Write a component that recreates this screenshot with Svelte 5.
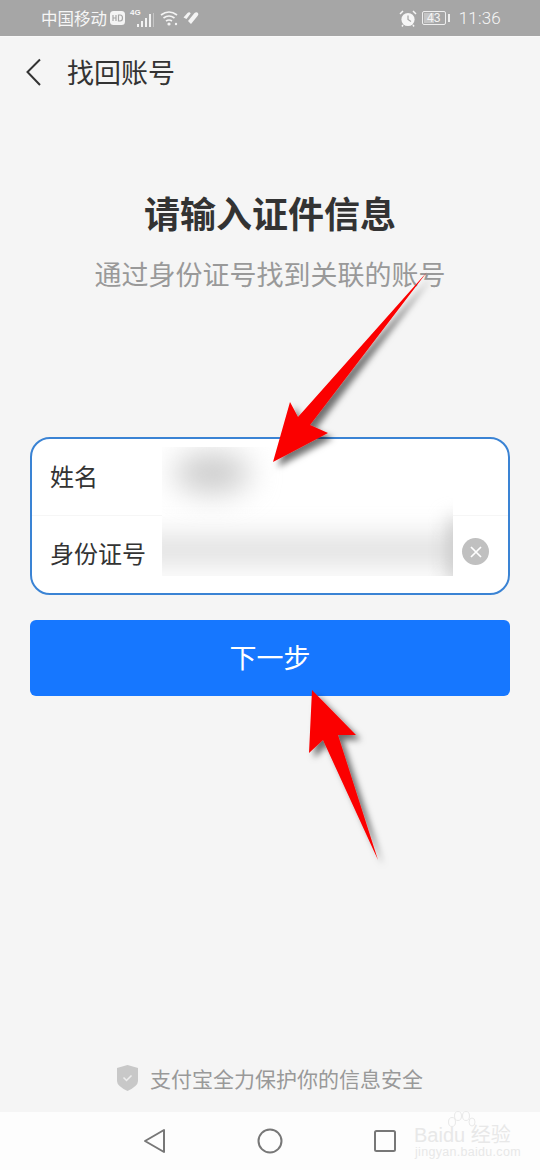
<script>
  const bars = [3, 6, 9, 13];
</script>

<div class="page">
  <header class="status">
    <div class="left">
      <span class="carrier">中国移动</span>
      <svg class="hd" viewBox="0 0 15 14" width="15" height="14"><rect width="15" height="14" rx="3.500" fill="#f4f4f4"/><path d="M3 4v6M6 4v6M3 7h3M8.500 4v6h1.600q2.400 0 2.400-3t-2.400-3z" fill="none" stroke="#a6a6a6" stroke-width="1.200"/></svg>
      <div class="signal">
        <span class="g4">4G</span>
        <svg viewBox="0 0 18 14" width="18" height="14"><g fill="#f2f2f2">{#each bars as b, i}<rect x={i * 4} y={14 - b} width="2" height={b}/>{/each}</g><rect x="16" y="0" width="1" height="14" fill="#c6c6c6"/></svg>
      </div>
      <svg class="wifi" viewBox="0 0 19 16" width="19" height="16" fill="none" stroke="#f4f4f4" stroke-width="1.700"><path d="M1 5q8-6 16 0M3.500 8q5.500-4 11 0M6 11q3-2 6 0"/><circle cx="9" cy="14" r="1.600" fill="#f4f4f4" stroke="none"/><circle cx="16" cy="14" r="1.200" fill="#f4f4f4" stroke="none"/></svg>
      <svg class="heart" viewBox="0 0 16 14" width="16" height="14"><path d="M0.500 6.500L4.500 2q2-1.500 3.200.5L3.500 8zM5 10l6.500-8q2-1.500 3.500 0 1 1.500-.5 3L8 13z" fill="#f4f4f4"/></svg>
    </div>
    <div class="right">
      <svg class="alarm" viewBox="0 0 18 17" width="18" height="17"><circle cx="9" cy="9.500" r="6.600" fill="#f6f6f6"/><path d="M9 5.500v4l3 2" fill="none" stroke="#a6a6a6" stroke-width="1.200"/><path d="M1 4l3-3M17 4l-3-3M4 15l-1 1.500M14 15l1 1.500" stroke="#f6f6f6" stroke-width="1.500"/></svg>
      <div class="battery"><span class="cell"><span class="fill"></span><span class="num">43</span></span><span class="nub"></span></div>
      <span class="time">11:36</span>
    </div>
  </header>

  <nav class="bar">
    <svg viewBox="0 0 18 28" width="18" height="28" fill="none" stroke="#333" stroke-width="2"><path d="M16 1.500L3.500 14 16 27"/></svg>
    <span>找回账号</span>
  </nav>

  <main class="content">
    <section class="intro">
      <h1>请输入证件信息</h1>
      <p>通过身份证号找到关联的账号</p>
    </section>

    <form class="card">
      <div class="row first"><span class="label">姓名</span></div>
      <div class="row second">
        <span class="label">身份证号</span>
        <span class="clear">
          <svg viewBox="0 0 12 12" width="12" height="12" stroke="#fff" stroke-width="1.700"><path d="M1 1l10 10M11 1L1 11"/></svg>
        </span>
      </div>
      <div class="mask">
        <i class="smudge name"></i>
        <i class="smudge id"></i>
        <i class="smudge edge"></i>
      </div>
    </form>

    <button type="button" class="next">下一步</button>

    <footer class="safe">
      <svg viewBox="0 0 21 26" width="21" height="26"><path d="M10.500 0L21 3v13q0 5-10.500 10Q0 21 0 16V3z" fill="#c8c8c8"/><path d="M6.500 12.500l3 3 5-5" fill="none" stroke="#eee" stroke-width="1.500"/></svg>
      <span>支付宝全力保护你的信息安全</span>
    </footer>
  </main>

  <div class="softkeys">
    <svg viewBox="0 0 24 26" width="24" height="26" fill="none" stroke="#777" stroke-width="2" stroke-linejoin="round"><path d="M21 2v22L2 13z"/></svg>
    <svg viewBox="0 0 26 26" width="26" height="26" fill="none" stroke="#777" stroke-width="2"><circle cx="13" cy="13" r="11.500"/></svg>
    <svg viewBox="0 0 24 24" width="24" height="24" fill="none" stroke="#777" stroke-width="2"><rect x="2" y="2" width="20" height="20" rx="1.500"/></svg>
  </div>

  <div class="watermark">
    <svg class="paw" viewBox="0 0 30 26" width="30" height="26" fill="none" stroke="#e9e9e9"><ellipse cx="6" cy="11" rx="3.500" ry="4.500"/><ellipse cx="12" cy="5" rx="3.500" ry="4.500"/><ellipse cx="20" cy="5" rx="3.500" ry="4.500"/><ellipse cx="26" cy="11" rx="3" ry="4"/></svg>
    <div class="wm-main">Bai<b>du</b> 经验</div>
    <div class="wm-sub">jingyan.baidu.com</div>
  </div>

  <svg class="arrows" viewBox="0 0 540 1170" width="540" height="1170">
    <defs>
      <filter id="drop" x="-30%" y="-30%" width="160%" height="160%">
        <feDropShadow dx="5" dy="5" stdDeviation="3" flood-color="#000" flood-opacity="0.55"/>
      </filter>
    </defs>
    <path filter="url(#drop)" d="M427 272L310 425 328 433 273 462 290 402 298 417z" fill="#fb0000"/>
    <path filter="url(#drop)" d="M312 690L356 735 338 735 378 860 323 740 309 753z" fill="#fb0000"/>
  </svg>
</div>

<style>
  :global(body) {
    margin: 0;
    background: #f5f5f5;
  }
  .page {
    position: relative;
    width: 540px;
    height: 1170px;
    overflow: hidden;
    display: flex;
    flex-direction: column;
    background: #f5f5f5;
    font-family: "Noto Sans CJK SC", "Noto Sans", sans-serif;
  }
  .status {
    height: 36px;
    flex: none;
    display: flex;
    align-items: center;
    justify-content: space-between;
    padding: 0 39px 0 41px;
    background: #a6a6a6;
    color: #f6f6f6;
    border-bottom: 1px solid #f9f9f9;
    box-sizing: content-box;
  }
  .left, .right {
    display: flex;
    align-items: center;
  }
  .carrier {
    font-size: 16.500px;
    line-height: 20px;
    width: 67px;
  }
  .hd { margin-left: 2px; }
  .signal {
    position: relative;
    width: 30px;
    height: 18px;
    margin-left: 0;
    display: flex;
    align-items: flex-end;
    justify-content: flex-end;
  }
  .g4 {
    position: absolute;
    left: 5px;
    top: -1px;
    font: 700 8px/10px "Liberation Sans", sans-serif;
  }
  .wifi { margin-left: 5px; }
  .heart { margin-left: 4px; }
  .alarm { margin-right: 5px; }
  .battery {
    display: flex;
    align-items: center;
    margin-right: 9px;
  }
  .cell {
    position: relative;
    width: 22px;
    height: 12px;
    border: 1.500px solid #eee;
    border-radius: 2px;
    display: block;
  }
  .fill {
    position: absolute;
    left: 1px;
    top: 1px;
    bottom: 1px;
    width: 10px;
    background: #c4c4c4;
  }
  .num {
    position: absolute;
    inset: 0;
    text-align: center;
    font: 12px/12px "Liberation Sans", sans-serif;
    color: #f4f4f4;
  }
  .nub {
    width: 2px;
    height: 8px;
    margin-left: 2px;
    background: #eee;
  }
  .time {
    font: 300 17px/20px Roboto, sans-serif;
    letter-spacing: 0.2px;
  }
  .bar {
    height: 70px;
    flex: none;
    display: flex;
    align-items: center;
    padding-left: 24px;
    color: #333;
    font-size: 27px;
  }
  .bar span {
    margin-left: 25px;
    line-height: 36px;
  }
  .content {
    flex: 1;
    display: flex;
    flex-direction: column;
    padding: 0 30px;
  }
  .intro {
    text-align: center;
    padding-top: 81px;
  }
  h1 {
    margin: 0;
    font-size: 36px;
    line-height: 48px;
    font-weight: 700;
    color: #333;
  }
  .intro p {
    margin: 21px 0 0;
    font-size: 27px;
    line-height: 34px;
    color: #999;
  }
  .card {
    position: relative;
    margin-top: 146px;
    height: 158px;
    box-sizing: border-box;
    border: 2px solid #3a83d4;
    border-radius: 20px;
    background: #fff;
    overflow: hidden;
  }
  .row {
    height: 77px;
    display: flex;
    align-items: center;
    padding: 0 0 4px 18px;
    box-sizing: border-box;
    color: #333;
    font-size: 24px;
    position: relative;
  }
  .first { border-bottom: 1px solid #f6f6f6; }
  .clear {
    position: absolute;
    right: 19px;
    top: 22px;
    width: 27px;
    height: 27px;
    border-radius: 50%;
    background: #c0c0c0;
    display: flex;
    align-items: center;
    justify-content: center;
  }
  .mask {
    position: absolute;
    left: 130px;
    top: 8px;
    width: 291px;
    height: 129px;
    overflow: hidden;
    background: #fff;
  }
  .smudge {
    position: absolute;
    display: block;
    background: #bdbdbd;
  }
  .name {
    left: 12px;
    top: 6px;
    width: 76px;
    height: 40px;
    border-radius: 50%;
    background: #cbcbcb;
    filter: blur(15px);
  }
  .id {
    left: -30px;
    top: 90px;
    width: 350px;
    height: 26px;
    background: #dcdcdc;
    filter: blur(14px);
  }
  .edge {
    right: -18px;
    top: 72px;
    width: 22px;
    height: 62px;
    background: #c4c4c4;
    filter: blur(10px);
  }
  .next {
    margin-top: 25px;
    height: 76px;
    flex: none;
    border: 0;
    border-radius: 6px;
    background: #1677ff;
    color: #fff;
    font: 400 27px/36px "Noto Sans CJK SC", sans-serif;
    padding: 0 0 2px;
  }
  .safe {
    margin-top: auto;
    height: 66px;
    display: flex;
    align-items: center;
    justify-content: center;
    gap: 12px;
    color: #999;
    font-size: 21px;
    padding-bottom: 2px;
    box-sizing: border-box;
  }
  .softkeys {
    height: 58px;
    flex: none;
    background: #fdfdfd;
    display: flex;
    align-items: center;
    padding-left: 143px;
    gap: 90px;
  }
  .watermark {
    position: absolute;
    left: 414px;
    top: 1110px;
    width: 112px;
    height: 58px;
    color: #e8e8e8;
    font-family: "Liberation Sans", "Noto Sans CJK SC", sans-serif;
    white-space: nowrap;
  }
  .paw {
    position: absolute;
    left: 32px;
    top: 1px;
  }
  .wm-main {
    position: absolute;
    left: 0;
    top: 12px;
    font-size: 20px;
    line-height: 26px;
  }
  .wm-main b { font-weight: 400; }
  .wm-sub {
    position: absolute;
    left: 1px;
    top: 35px;
    font-size: 12.500px;
    line-height: 14px;
    letter-spacing: 0.3px;
  }
  .arrows {
    position: absolute;
    left: 0;
    top: 0;
    pointer-events: none;
  }
</style>
